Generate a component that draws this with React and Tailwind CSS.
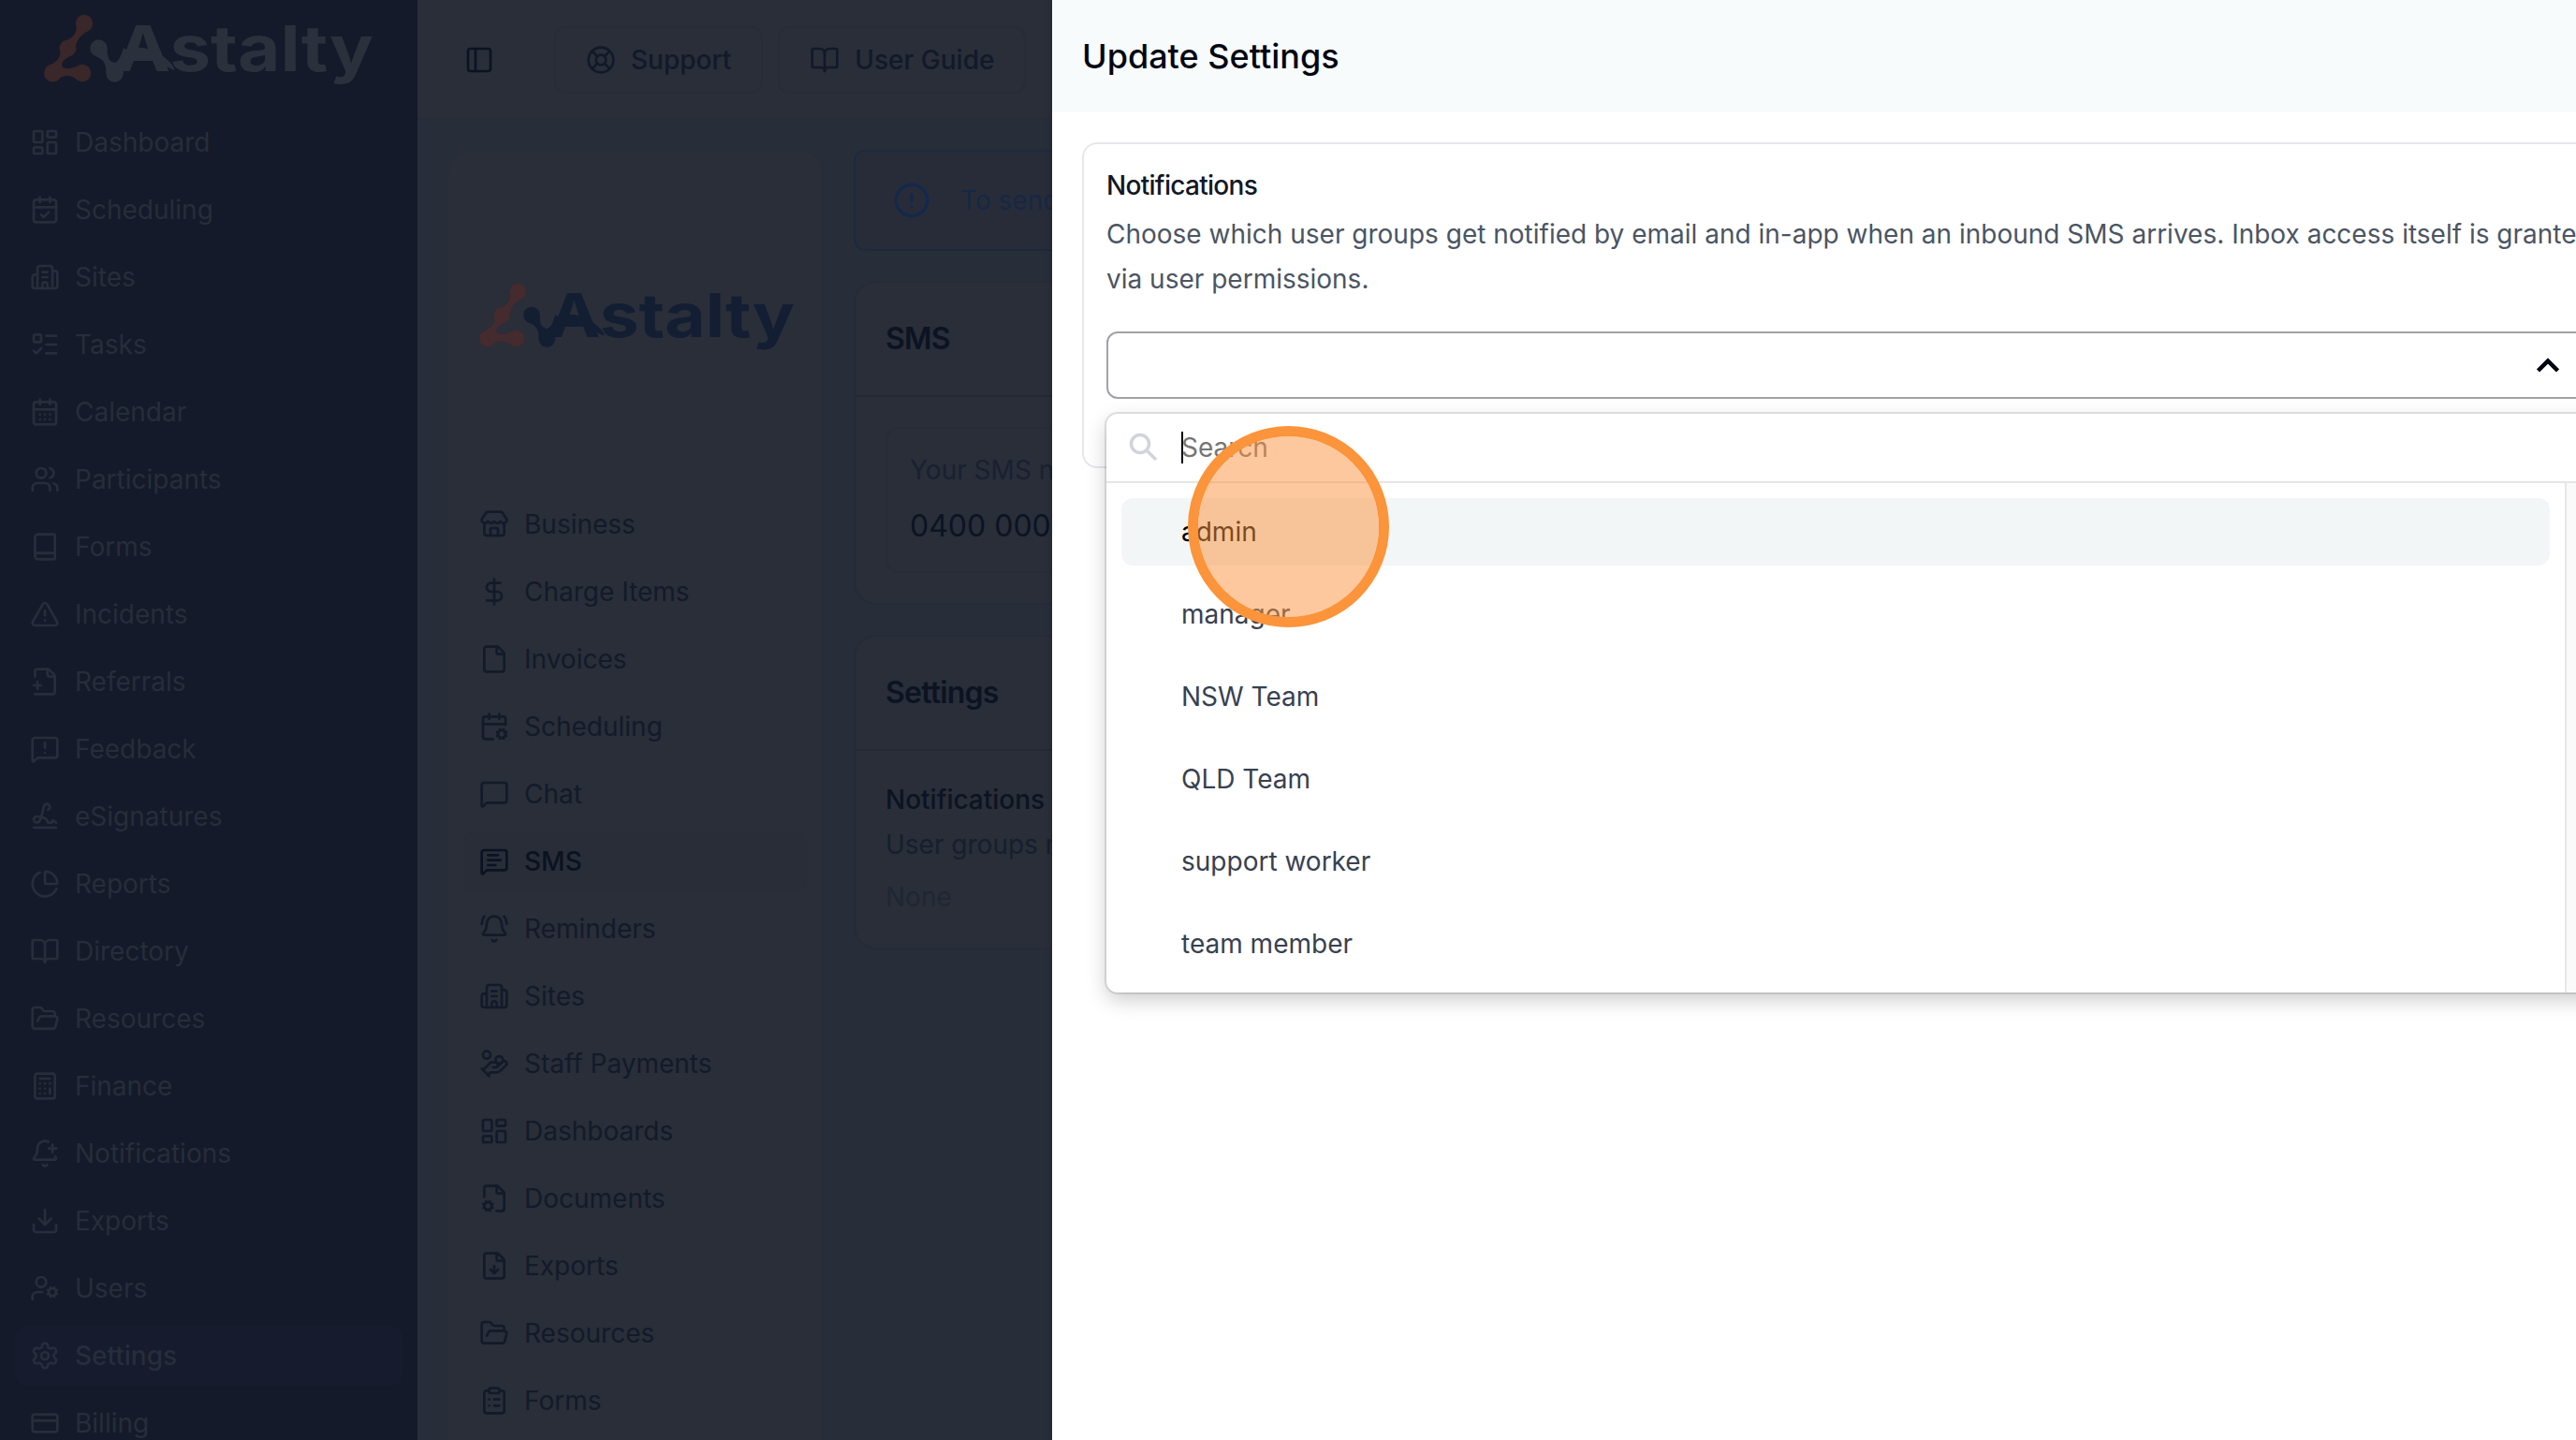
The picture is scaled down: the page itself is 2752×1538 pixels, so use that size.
import React, { useState } from 'react';
import {
  BellPlus,
  BellRing,
  Book,
  BookOpen,
  Building2,
  Calculator,
  CalendarCheck,
  CalendarCog,
  CalendarDays,
  ChartPie,
  CircleAlert,
  ClipboardList,
  CreditCard,
  DollarSign,
  Download,
  File,
  FileCog,
  FileDown,
  FolderOpen,
  HandCoins,
  LayoutDashboard,
  LifeBuoy,
  ListTodo,
  MessageSquare,
  MessageSquareText,
  MessageSquareWarning,
  PanelLeft,
  Settings,
  Signature,
  Store,
  TriangleAlert,
  UserCog,
  Users,
} from 'lucide-react';

// File with a plus on its left edge
function FileAdd({ className }) {
  return (
    <svg className={className} viewBox="0 0 24 24" fill="none" stroke="currentColor" strokeWidth="2" strokeLinecap="round" strokeLinejoin="round">
      <path d="M4 22h14a2 2 0 0 0 2-2V7l-5-5H6a2 2 0 0 0-2 2v4" />
      <path d="M14 2v4a2 2 0 0 0 2 2h4" />
      <path d="M3 15h6" />
      <path d="M6 12v6" />
    </svg>
  );
}

const mainNav = [
  { label: 'Dashboard', icon: LayoutDashboard },
  { label: 'Scheduling', icon: CalendarCheck },
  { label: 'Sites', icon: Building2 },
  { label: 'Tasks', icon: ListTodo },
  { label: 'Calendar', icon: CalendarDays },
  { label: 'Participants', icon: Users },
  { label: 'Forms', icon: Book },
  { label: 'Incidents', icon: TriangleAlert },
  { label: 'Referrals', icon: FileAdd },
  { label: 'Feedback', icon: MessageSquareWarning },
  { label: 'eSignatures', icon: Signature },
  { label: 'Reports', icon: ChartPie },
  { label: 'Directory', icon: BookOpen },
  { label: 'Resources', icon: FolderOpen },
  { label: 'Finance', icon: Calculator },
  { label: 'Notifications', icon: BellPlus },
  { label: 'Exports', icon: Download },
  { label: 'Users', icon: UserCog },
  { label: 'Settings', icon: Settings },
  { label: 'Billing', icon: CreditCard },
];

const settingsNav = [
  { label: 'Business', icon: Store },
  { label: 'Charge Items', icon: DollarSign },
  { label: 'Invoices', icon: File },
  { label: 'Scheduling', icon: CalendarCog },
  { label: 'Chat', icon: MessageSquare },
  { label: 'SMS', icon: MessageSquareText },
  { label: 'Reminders', icon: BellRing },
  { label: 'Sites', icon: Building2 },
  { label: 'Staff Payments', icon: HandCoins },
  { label: 'Dashboards', icon: LayoutDashboard },
  { label: 'Documents', icon: FileCog },
  { label: 'Exports', icon: FileDown },
  { label: 'Resources', icon: FolderOpen },
  { label: 'Forms', icon: ClipboardList },
];

const groups = ['admin', 'manager', 'NSW Team', 'QLD Team', 'support worker', 'team member'];

function Logo({ className, accent }) {
  return (
    <svg className={`overflow-visible ${className}`} viewBox="0 0 352 73" preserveAspectRatio="none" fill="currentColor">
      <g className={accent}>
        <circle cx="43" cy="10" r="9.200" />
        <circle cx="25.500" cy="36.500" r="9" />
        <circle cx="9.500" cy="63" r="9.500" />
        <circle cx="41" cy="63" r="9.200" />
        <path d="M35 14C34 22 30 26 21 29.500L33.500 40C33 30 38 23 47 18Z" />
        <path d="M17.500 39C18 48 12 52 5 55L14 70C22 64 30 65 36 71L38 54.500C30 59 19 60 19 54C19 50 24 47 31 43Z" />
      </g>
      {/* Node chain that runs into the first letter */}
      <g>
        <circle cx="58.500" cy="36.500" r="9.200" />
        <circle cx="75.500" cy="63.500" r="9.200" />
        <path d="M55 45C63 48 66.500 52 66.500 63.500L84.500 65C85 56 90 50 93 43L85 36C82 45 80 51 75.500 52C70 51 67 46 67.500 36Z" />
        <path d="M92 36C112 34 124 40 137 54L140 60C127 56 121 43 92 44Z" />
      </g>
      <text
        x="77"
        y="61"
        textLength="275"
        lengthAdjust="spacingAndGlyphs"
        className="font-['Inter',sans-serif] text-[68px] font-bold"
      >
        Astalty
      </text>
    </svg>
  );
}

function MainSidebar() {
  return (
    <aside className="flex w-[446px] shrink-0 flex-col bg-[#141a29] px-4 text-[#272d3b]">
      <div className="h-[120px] shrink-0 pt-[15px] pl-[31px]">
        <Logo className="h-[73px] w-[352px] text-[#2a303c]" accent="text-[#3a2729]" />
      </div>
      <nav className="flex flex-col gap-2">
        {mainNav.map(({ label, icon: Icon }) => (
          <a
            key={label}
            className={`flex h-16 shrink-0 items-center gap-4 rounded-xl px-4 ${
              label === 'Settings' ? 'bg-[#161b2e] font-medium' : ''
            }`}
          >
            <Icon className="size-8" />
            {label}
          </a>
        ))}
      </nav>
    </aside>
  );
}

function TopBar() {
  return (
    <header className="flex h-32 shrink-0 items-center border-b-2 border-[#272d38] bg-[#292e39] pt-[2px] pl-[50px] font-medium text-[#121929]">
      <PanelLeft className="mr-16 size-8 text-[#0c1322]" />
      <div className="flex gap-4">
        <button className="flex h-[72px] items-center gap-4 rounded-xl border-2 border-[#272c38] px-8">
          <LifeBuoy className="size-8" /> Support
        </button>
        <button className="flex h-[72px] items-center gap-4 rounded-xl border-2 border-[#272c38] px-8">
          <BookOpen className="size-8" /> User Guide
        </button>
      </div>
    </header>
  );
}

function SettingsNav() {
  return (
    <div className="w-[402px] shrink-0 rounded-t-3xl border-2 border-b-0 border-[#282d39] bg-[#292e39] px-4 text-[#131a29]">
      <div className="h-[366px] pt-[140px] pl-4">
        <Logo className="h-[69px] w-[337px] text-[#131e33]" accent="text-[#452b2d]" />
      </div>
      <nav className="flex flex-col gap-2">
        {settingsNav.map(({ label, icon: Icon }) => (
          <a
            key={label}
            className={`flex h-16 shrink-0 items-center gap-4 rounded-xl px-4 ${
              label === 'SMS' ? 'bg-[#282d38] font-medium text-[#0b1221]' : ''
            }`}
          >
            <Icon className="size-8" />
            {label}
          </a>
        ))}
      </nav>
    </div>
  );
}

function Card({ title, className, children }) {
  return (
    <section className={`rounded-3xl border-2 border-[#262b37] bg-[#292e39] ${className}`}>
      <h2 className="flex h-[122px] items-center border-b-2 border-[#242a35] px-8 text-[32px] font-semibold tracking-tight text-[#0c1322]">
        {title}
      </h2>
      {children}
    </section>
  );
}

function SmsPage() {
  return (
    <div className="flex w-[1200px] shrink-0 flex-col gap-8">
      <div className="flex h-[108px] items-center gap-8 rounded-xl border-2 border-[#1c2a3d] bg-[#282c39] px-10 text-[#152844]">
        <CircleAlert className="size-10 text-[#13284b]" />
        To send
      </div>
      <Card title="SMS" className="h-[346px]">
        <div className="m-8 h-[156px] rounded-2xl border-2 border-[#272c37] px-6 pt-6">
          <p className="leading-[40px] text-[#1a2030]">Your SMS number</p>
          <p className="mt-4 text-[32px] leading-[48px] text-[#0c1322]">0400 000 000</p>
        </div>
      </Card>
      <Card title="Settings" className="h-[336px]">
        <div className="px-8 pt-8">
          <h3 className="leading-[40px] font-medium text-[#0c1322]">Notifications</h3>
          <p className="mt-1 leading-[48px] text-[#171e2d]">User groups notified</p>
          <p className="mt-3 leading-[40px] text-[#202633]">None</p>
        </div>
      </Card>
    </div>
  );
}

function GroupDropdown({ active, onSelect }) {
  return (
    <div className="absolute top-[442px] left-[58px] h-[618px] w-[1600px] overflow-hidden rounded-xl bg-white shadow-[0_0_0_2px_rgba(0,0,0,0.1),0_8px_22px_rgba(0,0,0,0.2)]">
      <div className="flex h-[74px] items-center border-b-2 border-[#e5e5e5] pl-6">
        <svg className="size-8" viewBox="0 0 32 32" fill="none" stroke="#d1d5db" strokeWidth="3.500">
          <circle cx="12" cy="12" r="9.500" />
          <path d="M19 19l10 10" />
        </svg>
        <div className="ml-6 h-[34px] w-[2px] bg-black" />
        <span className="-ml-[2px] text-[#757575]">Search</span>
      </div>
      <div className="flex h-[544px]">
        <ul className="flex w-[1558px] shrink-0 flex-col gap-4 px-4 pt-4">
          {groups.map((group) => (
            <li
              key={group}
              onMouseEnter={() => onSelect(group)}
              className={`flex h-[72px] shrink-0 items-center rounded-xl pl-16 ${
                group === active ? 'bg-[#f3f6f7] text-black' : 'text-[#374151]'
              }`}
            >
              {group}
            </li>
          ))}
        </ul>
        <div className="flex-1 border-l-2 border-[#e8e8e8] bg-[#fafafa]" />
      </div>
    </div>
  );
}

function UpdateSettingsPanel() {
  const [active, setActive] = useState('admin');

  return (
    <div className="absolute top-0 left-[1124px] h-[1538px] w-[1740px] bg-white shadow-[0_0_8px_rgba(0,0,0,0.15)]">
      <h1 className="flex h-[120px] items-center bg-[#f8fbfc] px-8 text-[36px] font-medium text-[#030712]">
        Update Settings
      </h1>
      <div className="mx-8 mt-8 h-[348px] rounded-2xl border-2 border-[#e5e7eb] px-6 pt-6">
        <h2 className="leading-[40px] font-medium tracking-tight text-[#111827]">Notifications</h2>
        <p className="mt-2 w-[1624px] leading-[48px] text-[#4b5563]">
          Choose which user groups get notified by email and in-app when an inbound SMS arrives. Inbox access itself is granted
          <br />
          via user permissions.
        </p>
        <div className="mt-8 flex h-[72px] items-center rounded-xl border-2 border-[#a1a1aa] pl-[1526px]">
          <svg className="h-[16px] w-[24px] shrink-0" viewBox="0 0 24 16" fill="none" stroke="#030712" strokeWidth="4.500">
            <path d="M1.500 14L12 3.500L22.500 14" />
          </svg>
        </div>
      </div>
      <GroupDropdown active={active} onSelect={setActive} />
      {/* Click marker */}
      <div className="pointer-events-none absolute top-[455px] left-[145px] size-[215px] rounded-full border-[11px] border-[#fb943a] bg-[#fb923c]/50 bg-clip-padding" />
    </div>
  );
}

export default function App() {
  return (
    <div className="relative flex h-[1538px] w-[2752px] overflow-hidden bg-[#282d3a] font-['Inter',sans-serif] text-[28px] leading-[40px] [font-variation-settings:'opsz'_14]">
      <MainSidebar />
      <main className="flex min-w-0 flex-1 flex-col">
        <TopBar />
        <div className="flex min-h-0 flex-1 items-stretch gap-8 overflow-hidden pt-8 pl-8">
          <SettingsNav />
          <SmsPage />
        </div>
      </main>
      <UpdateSettingsPanel />
    </div>
  );
}
